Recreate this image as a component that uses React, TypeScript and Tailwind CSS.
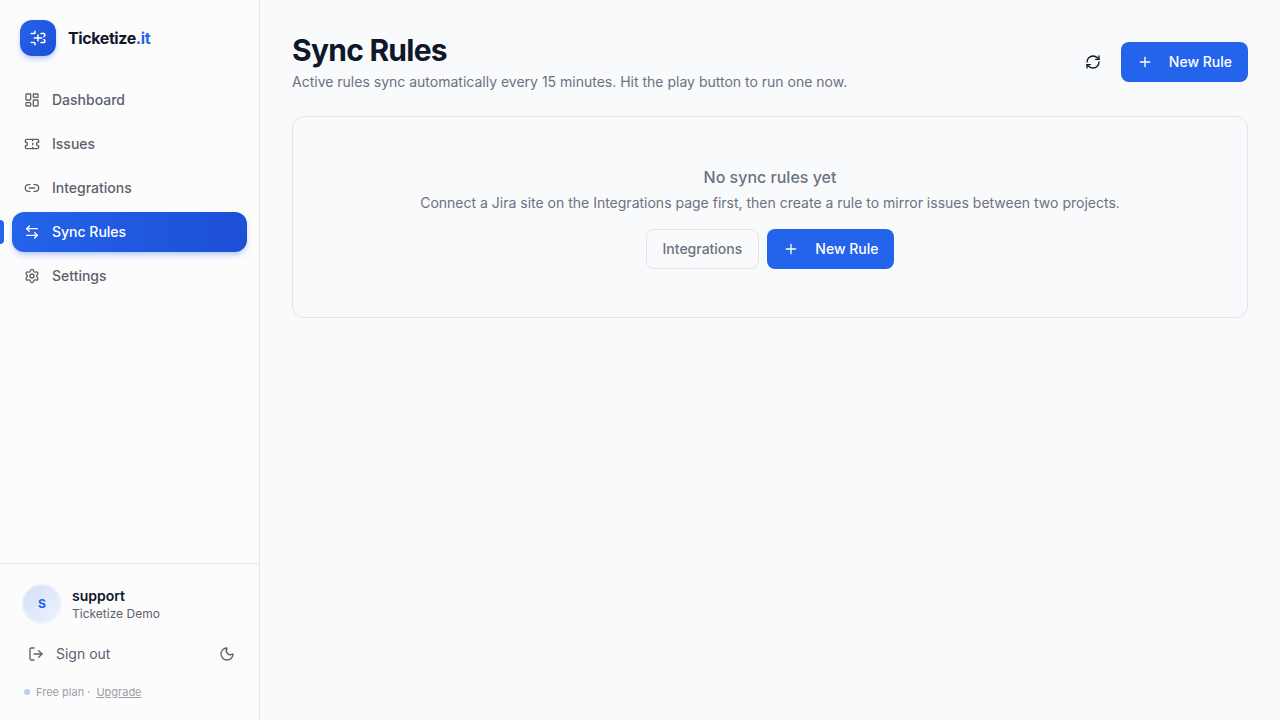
import {
    ArrowLeftRight,
    LayoutDashboard,
    Link2,
    LogOut,
    Moon,
    Plus,
    RefreshCw,
    Settings,
    Ticket,
} from "lucide-react";
import clsx from "clsx";

const links = [
    { label: "Dashboard", icon: LayoutDashboard },
    { label: "Issues", icon: Ticket },
    { label: "Integrations", icon: Link2 },
    { label: "Sync Rules", icon: ArrowLeftRight, active: true },
    { label: "Settings", icon: Settings },
];

function Logo() {
    return (
        <svg
            className="size-[18px]"
            viewBox="0 0 24 24"
            fill="none"
            stroke="currentColor"
            strokeWidth="2"
            strokeLinecap="round"
            strokeLinejoin="round"
            aria-hidden="true"
        >
            <path d="M3 6h4a1 1 0 0 0 1-1V3" />
            <path d="M3 18h4a1 1 0 0 1 1 1v2" />
            <path d="M16 6h4a1 1 0 0 1 1 1v2a3 3 0 0 0-1 1" />
            <path d="M16 18h4a1 1 0 0 0 1-1v-2a3 3 0 0 1-1-1" />
            <path d="M7 12h10M12 8v8" />
        </svg>
    );
}

function NewRuleButton() {
    return (
        <button
            type="button"
            className="flex h-10 items-center gap-4 rounded-lg bg-[#2463eb] px-4 text-sm font-medium text-white"
        >
            <Plus className="size-4" />
            New Rule
        </button>
    );
}

function Sidebar() {
    return (
        <aside className="flex w-[260px] shrink-0 flex-col border-r border-[#e4e5e9] bg-[#fcfcfd]">
            <div className="flex items-center gap-3 p-5">
                <div className="flex size-9 items-center justify-center rounded-xl bg-linear-to-br from-[#2463eb] to-[#1d4fd7] text-white shadow-md shadow-[#2463eb]/25">
                    <Logo />
                </div>
                <span className="text-base font-bold tracking-tight text-slate-900">
                    Ticketize<span className="text-[#2463eb]">.it</span>
                </span>
            </div>
            <nav className="flex flex-col gap-1 px-3 py-1">
                {links.map(({ label, icon: Icon, active }) => (
                    <a
                        key={label}
                        href="#"
                        aria-current={active ? "page" : undefined}
                        className={clsx(
                            "relative flex h-10 items-center gap-3 rounded-xl px-3 text-sm font-medium",
                            active
                                ? "bg-linear-to-r from-[#2463eb] to-[#1d4fd7] text-white shadow-md shadow-[#2463eb]/25"
                                : "text-[#5c616e]",
                        )}
                    >
                        {active && (
                            <span className="absolute top-2 -left-3 h-6 w-1 rounded-r-sm bg-[#2463eb]" />
                        )}
                        <Icon className="size-4" />
                        {label}
                    </a>
                ))}
            </nav>
            <div className="mt-auto border-t border-[#e4e5e9] px-3 pt-4 pb-5">
                <div className="flex items-center gap-2.5 px-2.5 py-1">
                    <div className="flex size-10 items-center justify-center rounded-full border-2 border-white/30 bg-linear-to-br from-[#2463eb]/20 to-[#2463eb]/5 bg-origin-border text-xs font-bold text-[#2463eb]">
                        S
                    </div>
                    <div>
                        <p className="text-sm font-semibold text-slate-900">
                            support
                        </p>
                        <p className="text-xs text-[#5c616e]">Ticketize Demo</p>
                    </div>
                </div>
                <div className="mt-2 flex items-center justify-between text-[#5c616e]">
                    <button
                        type="button"
                        className="flex h-9 items-center gap-3 px-4 text-sm"
                    >
                        <LogOut className="size-4" />
                        Sign out
                    </button>
                    <button
                        type="button"
                        aria-label="Toggle theme"
                        className="flex h-9 w-10 items-center justify-center"
                    >
                        <Moon className="size-4" />
                    </button>
                </div>
                <div className="mt-3 flex items-center gap-1.5 px-3 text-[11px] leading-4 text-[#9b9ea6]">
                    <span className="size-1.5 rounded-full bg-[#2463eb]/30" />
                    <span>Free plan ·</span>
                    <a href="#" className="underline">
                        Upgrade
                    </a>
                </div>
            </div>
        </aside>
    );
}

export default function App() {
    return (
        <div className="flex min-h-screen bg-[#f9fafc] font-['Inter',sans-serif]">
            <Sidebar />
            <main className="min-w-0 flex-1 p-8">
                <header className="flex items-center justify-between gap-4">
                    <div>
                        <h1 className="text-3xl font-bold tracking-tight text-slate-900">
                            Sync Rules
                        </h1>
                        <p className="mt-1 text-sm text-[#6b7280]">
                            Active rules sync automatically every 15 minutes.
                            Hit the play button to run one now.
                        </p>
                    </div>
                    <div className="flex items-center gap-2">
                        <button
                            type="button"
                            aria-label="Refresh"
                            className="flex size-10 items-center justify-center text-slate-900"
                        >
                            <RefreshCw className="size-4" />
                        </button>
                        <NewRuleButton />
                    </div>
                </header>
                <section className="mt-6 flex flex-col items-center rounded-xl border border-[#e4e5e9] px-6 py-12 text-center text-[#6b7280]">
                    <h2 className="font-medium">No sync rules yet</h2>
                    <p className="mt-1 text-sm">
                        Connect a Jira site on the Integrations page first, then
                        create a rule to mirror issues between two projects.
                    </p>
                    <div className="mt-4 flex gap-2">
                        <a
                            href="#"
                            className="flex h-10 items-center rounded-lg border border-[#e4e5e9] px-4 text-sm font-medium"
                        >
                            Integrations
                        </a>
                        <NewRuleButton />
                    </div>
                </section>
            </main>
        </div>
    );
}
